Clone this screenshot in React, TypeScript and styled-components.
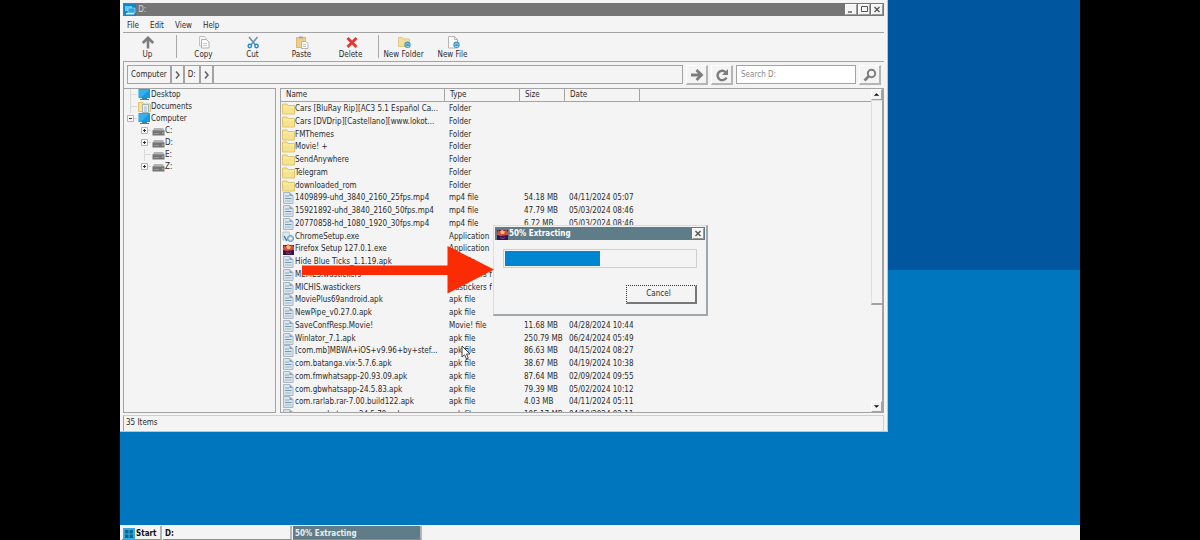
import React from "react";
import styled, { createGlobalStyle, css } from "styled-components";

const c = {
  face: "#f4f4f4",
  line: "#a3a3a3",
  soft: "#cfcfcf",
  title: "#757575",
  active: "#5f7d89",
  text: "#2b2b2b",
  glyph: "#7d7d7d",
  blue: "#0086d1",
};

const Global = createGlobalStyle`
  * { box-sizing: border-box; }
  body { margin: 0; background: #000; }
  body, button, input, table {
    font-family: "DejaVu Sans Condensed", "DejaVu Sans", sans-serif;
    font-size: 8px;
    line-height: 12px;
    color: ${c.text};
  }
  button { margin: 0; padding: 0; border: 0; background: none; }
  ul { list-style: none; margin: 0; padding: 0; }
`;

const Desktop = styled.main`
  position: relative;
  width: 80%;
  height: 100vh;
  margin: 0 auto;
  display: flex;
  flex-direction: column;
  overflow: hidden;
  background: linear-gradient(#00569f 50%, #0076be 50%);
`;

const Workspace = styled.div`
  flex: 1;
  min-height: 0;
`;

/* Explorer window */
const Window = styled.section`
  width: 80%;
  height: 80vh;
  display: flex;
  flex-direction: column;
  padding: 3px 3px 0;
  background: ${c.face};
  border-right: 1px solid #a9cbe0;
  border-bottom: 1px solid #a9cbe0;
`;

const TitleBar = styled.header<{ $active?: boolean }>`
  display: flex;
  align-items: center;
  flex: none;
  height: 13px;
  padding: 0 1px;
  color: ${(p) => (p.$active ? "#fff" : "#d6d6d6")};
  background: ${(p) => (p.$active ? c.active : c.title)};
  font-weight: ${(p) => (p.$active ? "bold" : "normal")};
`;

const TitleText = styled.span`
  flex: 1;
  padding-top: 1px;
`;

const CaptionButton = styled.button`
  display: flex;
  width: 12px;
  height: 11px;
  margin-left: 1px;
  background: ${c.face};
  border: 1px solid #fff;
  border-right-color: #9a9a9a;
  border-bottom-color: #9a9a9a;
`;

const MenuBar = styled.nav`
  display: flex;
  flex: none;
  gap: 11px;
  height: 17px;
  padding: 3px 4px 0;
  border-bottom: 1px solid ${c.line};
`;

const ToolBar = styled.div`
  display: flex;
  flex: none;
  height: 29px;
  border-bottom: 1px solid ${c.line};
`;

const Tool = styled.button`
  display: flex;
  flex-direction: column;
  align-items: center;
  width: 49px;
  padding-top: 3px;
  white-space: nowrap;
`;

const Separator = styled.span`
  width: 1px;
  margin: 2px 2px 3px 4px;
  background: #a9a9a9;
  & ~ & { margin-left: 3px; margin-right: 0; }
`;

const AddressBar = styled.form`
  display: flex;
  flex: none;
  gap: 3px;
  height: 26px;
  padding: 3px;
  border-left: 1px solid ${c.line};
`;

const Crumbs = styled.div`
  display: flex;
  flex: 1;
  height: 19px;
  border: 1px solid ${c.line};
`;

const Crumb = styled.button<{ $chevron?: boolean }>`
  padding: 0 ${(p) => (p.$chevron ? 2 : 3)}px;
  border-right: 2px solid ${c.line};
  svg { display: block; }
`;

const RaisedButton = styled.button`
  display: flex;
  align-items: center;
  justify-content: center;
  width: 22px;
  height: 20px;
  border: 1px solid #fff;
  border-right: 2px solid #b5b5b5;
  border-bottom: 2px solid #b5b5b5;
`;

const Search = styled.input`
  width: 120px;
  height: 19px;
  padding: 0 4px;
  border: 1px solid ${c.line};
  border-radius: 0;
  background: #fff;
  &::placeholder { color: #8a8a8a; opacity: 1; }
`;

const Panes = styled.div`
  display: flex;
  flex: 1;
  gap: 4px;
  min-height: 0;
`;

const pane = css`
  border: 1px solid ${c.line};
  overflow: hidden;
`;

const TreePane = styled.nav`
  ${pane}
  width: 153px;
`;

const TreeItem = styled.li<{ $level: number }>`
  display: flex;
  align-items: center;
  height: 12px;
  padding-left: ${(p) => (p.$level ? 16 : 2)}px;
  svg { flex: none; }
`;

const ListPane = styled.div`
  ${pane}
  display: flex;
  flex: 1;
  border-right-width: 2px;
`;

const Files = styled.table`
  flex: 1;
  display: block;
  overflow: hidden;
  border-collapse: collapse;
`;

const Head = styled.thead`
  display: block;
  height: 13px;
  border-bottom: 1px solid ${c.line};
`;

const Body = styled.tbody`
  display: block;
`;

const cellWidths = css`
  & > :nth-child(1) { width: 164px; }
  & > :nth-child(2) { width: 75px; }
  & > :nth-child(3) { width: 45px; }
  & > :nth-child(4) { width: 75px; }
`;

const HeadRow = styled.tr`
  display: flex;
  ${cellWidths}
`;

const HeadCell = styled.th`
  height: 12px;
  padding: 0 5px;
  text-align: left;
  font-weight: normal;
  border-right: 1px solid ${c.line};
`;

/* Three 13px rows and one of 12px keep the list's line pitch */
const FileRow = styled.tr`
  display: flex;
  height: 13px;
  &:nth-child(4n) { height: 12px; }
  ${cellWidths}
`;

const Cell = styled.td`
  display: flex;
  align-items: center;
  padding: 0 3px 0 4px;
  white-space: nowrap;
`;

const NameCell = styled(Cell)`
  padding-left: 1px;
  svg { flex: none; }
`;

const ScrollBar = styled.div`
  display: flex;
  flex-direction: column;
  width: 11px;
`;

const ScrollButton = styled.button`
  display: flex;
  height: 11px;
  border: 1px solid #fff;
  border-right-color: ${c.line};
  border-bottom-color: ${c.line};
`;

const Track = styled.div`
  flex: 1;
`;

const Thumb = styled.div`
  height: 68%;
  border: 1px solid #dedede;
  border-right: 0;
  border-bottom: 2px solid ${c.line};
`;

const StatusBar = styled.footer`
  flex: none;
  height: 16px;
  margin-top: 2px;
  padding: 1px 2px;
  border: 1px solid ${c.soft};
  border-left-color: ${c.line};
  border-bottom: 0;
`;

/* Progress dialog */
const Dialog = styled.section`
  position: absolute;
  left: 373px;
  top: 225px;
  width: 215px;
  padding: 1px;
  background: ${c.face};
  border: 1px solid #dcdcdc;
  border-right: 2px solid #a0a6a9;
  border-bottom: 2px solid #a0a6a9;
`;

const DialogBody = styled.div`
  display: flex;
  flex-direction: column;
  align-items: flex-end;
  gap: 17px;
  padding: 9px 8px;
`;

const Progress = styled.progress`
  appearance: none;
  display: block;
  width: 100%;
  height: 19px;
  padding: 1px;
  border: 1px solid ${c.soft};
  &::-webkit-progress-bar { background: ${c.face}; }
  &::-webkit-progress-value { background: ${c.blue}; }
`;

const CancelButton = styled.button`
  width: 71px;
  height: 19px;
  padding-right: 5px;
  border: 1px dotted #333;
  border-right: 2px solid #777;
  border-bottom: 2px solid #777;
`;

const Arrow = styled.svg`
  position: absolute;
  left: 182px;
  top: 246px;
`;

const Pointer = styled.svg`
  position: absolute;
  left: 341px;
  top: 345px;
`;

/* Taskbar */
const TaskBar = styled.footer`
  display: flex;
  flex: none;
  gap: 1px;
  height: 15px;
  padding: 1px 2px 0;
  background: ${c.face};
`;

const Task = styled.button<{ $active?: boolean; $start?: boolean }>`
  display: flex;
  align-items: center;
  gap: 1px;
  width: ${(p) => (p.$start ? 40 : 129)}px;
  padding: 2px 0 0 ${(p) => (p.$start ? 1 : 2)}px;
  font-weight: bold;
  color: ${(p) => (p.$active ? "#e9f0f2" : "#111")};
  background: ${(p) => (p.$active ? c.active : c.face)};
  border-right: 2px solid #b4b4b4;
  border-bottom: 1px solid #8c8c8c;
`;

const Monitor = () => (
  <svg width="13" height="12" viewBox="0 0 13 12">
    <path d="M.5 0H12v9H.5z" fill="#159bdf" />
    <path d="M1 .5h10.500L3 8.500H1z" fill="#35b0ea" />
    <path d="M4 9h5v1h2v1H2v-1h2z" fill="#3c83ac" />
  </svg>
);

const ComputerTitle = () => (
  <svg width="12" height="12" viewBox="0 0 12 12">
    <path d="M0 0h12v12H0z" fill="#1387c6" />
    <path d="M1 2h7v5H1z" fill="#59c9f4" />
    <path d="M4 4h7v5H4z" fill="#2aa6e2" stroke="#b9e9fa" strokeWidth=".6" />
    <path d="M2 9h8v1.500H2z" fill="#d8eef8" />
  </svg>
);

const Folder = () => (
  <svg width="13" height="12" viewBox="0 0 13 12">
    <path d="M.5 11V1H5l1 1.500h6.500V11z" fill="#f7e38e" stroke="#dcc470" />
    <path d="M1 4h11" stroke="#fdf1b4" />
  </svg>
);

const Documents = () => (
  <svg width="13" height="12" viewBox="0 0 13 12">
    <path d="M.5 10.500V1.500H5l1 1.500h6.500v7.500z" fill="#f7e38e" stroke="#dcc470" />
    <path d="M4.500 3.500h6v8h-6z" fill="#eaf1f4" stroke="#a3b1b8" />
    <path d="M6 6h3M6 8h3M6 10h3" stroke="#93a9b5" strokeWidth=".8" />
  </svg>
);

const Drive = () => (
  <svg width="13" height="12" viewBox="0 0 13 12">
    <path d="M2 3h9l1.500 3H.5z" fill="#b3b3b3" />
    <path d="M.5 5.500h12v5H.5z" fill="#757575" />
    <path d="M2 8.500h5" stroke="#9b9b9b" />
    <path d="M10 8h1.500" stroke="#bfd0c0" />
  </svg>
);

const Page = () => (
  <svg width="13" height="12" viewBox="0 0 13 12">
    <path d="M1.500.5h6.500l3 3v8h-9.500z" fill="#d9e5ee" stroke="#a9b6c0" />
    <path d="M7.500 1v3h3.500z" fill="#7f9db4" />
    <path d="M3 4h4" stroke="#8aa8be" />
    <path d="M3 6.500h6.500" stroke="#7897ad" />
    <path d="M3 9h6.500" stroke="#9fb8c9" />
  </svg>
);

const Setup = () => (
  <svg width="13" height="12" viewBox="0 0 13 12">
    <path d="M1 1h6l1 3-3 5H1z" fill="#dbe8f0" stroke="#a9bac5" strokeWidth=".8" />
    <path d="M2 5l3 5" stroke="#3d7ba8" strokeWidth="1.400" />
    <circle cx="8.500" cy="7.500" r="3" fill="#a9cbe2" stroke="#6b92b0" />
    <circle cx="8.500" cy="7.500" r="1.200" fill="#fff" />
  </svg>
);

const Firefox = () => (
  <svg width="13" height="12" viewBox="0 0 13 12">
    <path d="M1 2h11v10H1z" fill="#2d1749" />
    <path d="M1 5l1-3 2 1.500L6 1l2 2 2-1.500L12 4v4H1z" fill="#d84b35" />
    <path d="M4 3.500l2-1.500 3 1.500L8 6H5z" fill="#f4b27c" />
    <path d="M1 7l4 1 7-1v5H1z" fill="#321554" />
    <path d="M4 9.500l3 1 2-1" stroke="#9b3e86" fill="none" />
  </svg>
);

const Expander = ({ open }: { open?: boolean }) => (
  <svg width="12" height="12" viewBox="0 0 12 12">
    <path d="M1.500 2.500h6v6h-6z" fill="#f8f8f8" stroke="#b5b5b5" />
    <path d={open ? "M3 5.500h3" : "M3 5.500h3M4.500 4v3"} stroke="#333" />
    <path d="M8 5.500h3" stroke="#d5d5d5" />
  </svg>
);

const Branch = () => (
  <svg width="12" height="12" viewBox="0 0 12 12">
    <path d="M4.500 0v12M5 5.500h6" stroke="#dadada" fill="none" />
  </svg>
);

const Chevron = () => (
  <svg width="7" height="10" viewBox="0 0 7 10">
    <path d="M2 1.500L5 5 2 8.500" fill="none" stroke="#5f5f5f" strokeWidth="1.500" />
  </svg>
);

const UpIcon = () => (
  <svg width="14" height="13" viewBox="0 0 14 13">
    <path d="M7 12.500V2M1.800 7L7 1.800 12.200 7" fill="none" stroke={c.glyph} strokeWidth="2.600" />
  </svg>
);

const CopyIcon = () => (
  <svg width="14" height="13" viewBox="0 0 14 13">
    <path d="M2.500.5h5l2 2v7.500h-7z" fill="#f8f8f8" stroke="#c2c2c2" />
    <path d="M4.500 3.500h5l2.500 2.500v6H4.500z" fill="#fbfbfb" stroke="#b0b0b0" />
    <path d="M6 7.500h4M6 9.500h4" stroke="#cdcdcd" />
  </svg>
);

const CutIcon = () => (
  <svg width="14" height="13" viewBox="0 0 14 13">
    <path d="M3 1l6.500 8M11.500 1L5 9" stroke="#6d93ad" strokeWidth="1.600" />
    <circle cx="3.800" cy="10" r="1.700" fill="none" stroke="#1f8bcb" strokeWidth="1.400" />
    <circle cx="10.500" cy="10" r="1.700" fill="none" stroke="#1f8bcb" strokeWidth="1.400" />
  </svg>
);

const PasteIcon = () => (
  <svg width="14" height="13" viewBox="0 0 14 13">
    <path d="M1.500 1.500h9v10h-9z" fill="#efcf8b" stroke="#dcb96f" />
    <path d="M4 .5h4v2H4z" fill="#a5a5a5" />
    <path d="M6.500 5.500h4l2.500 2v5H6.500z" fill="#fafafa" stroke="#b5b5b5" />
    <path d="M8 8.500h3M8 10.500h3" stroke="#c5c5c5" />
  </svg>
);

const DeleteIcon = () => (
  <svg width="14" height="13" viewBox="0 0 14 13">
    <path d="M3.500 2l9 9M12.500 2l-9 9" stroke="#e23b35" strokeWidth="3" />
  </svg>
);

const Globe = () => (
  <g>
    <circle cx="10.500" cy="8.800" r="3.200" fill="#4b9cc9" />
    <path d="M8.500 8.500q2-2 4 0M9 10.500h3" fill="none" stroke="#a7d8ee" strokeWidth=".8" />
  </g>
);

const NewFolderIcon = () => (
  <svg width="14" height="13" viewBox="0 0 14 13">
    <path d="M1.500 10.500v-9h4l1 1.500h6v7.500z" fill="#f2e09a" stroke="#dfca88" />
    <Globe />
  </svg>
);

const NewFileIcon = () => (
  <svg width="14" height="13" viewBox="0 0 14 13">
    <path d="M2.500.5h6l3 3v8.500h-9z" fill="#fbfbfb" stroke="#b5b5b5" />
    <path d="M8.500.5v3h3" fill="none" stroke="#b5b5b5" />
    <Globe />
  </svg>
);

const GoIcon = () => (
  <svg width="14" height="14" viewBox="0 0 14 14">
    <path d="M1 7h10M6.500 2l5 5-5 5" fill="none" stroke={c.glyph} strokeWidth="2.800" />
  </svg>
);

const RefreshIcon = () => (
  <svg width="14" height="14" viewBox="0 0 14 14">
    <path d="M11.500 9.500A4.700 4.700 0 1 1 10.500 4" fill="none" stroke={c.glyph} strokeWidth="2.400" />
    <path d="M13 1v6H7z" fill={c.glyph} />
  </svg>
);

const SearchIcon = () => (
  <svg width="14" height="14" viewBox="0 0 14 14">
    <circle cx="8.500" cy="5.500" r="3.700" fill="none" stroke={c.glyph} strokeWidth="2" />
    <path d="M6 8l-4.500 4.500" stroke={c.glyph} strokeWidth="2.600" />
  </svg>
);

const Glyph = ({ d, fill, weight = 1.4 }: { d: string; fill?: string; weight?: number }) => (
  <svg width="10" height="9" viewBox="0 0 10 9">
    <path d={d} fill={fill ?? "none"} stroke={fill ? "none" : "#555"} strokeWidth={weight} />
  </svg>
);

const CROSS = "M2.500 2l5 5M7.500 2l-5 5";

const StartLogo = () => (
  <svg width="12" height="12" viewBox="0 0 12 12">
    <path d="M0 0h12v12H0z" fill="#37a9dc" />
    <path d="M2 2h3.500v3.500H2zM6.500 2H10v3.500H6.500zM2 6.500h3.500V10H2zM6.500 6.500H10V10H6.500z" fill="#0d6796" />
  </svg>
);

const tools: [string, React.FC][][] = [
  [["Up", UpIcon]],
  [["Copy", CopyIcon], ["Cut", CutIcon], ["Paste", PasteIcon], ["Delete", DeleteIcon]],
  [["New Folder", NewFolderIcon], ["New File", NewFileIcon]],
];

const tree: { label: string; level: number; icon: React.FC; mark: "leaf" | "open" | "closed" }[] = [
  { label: "Desktop", level: 0, icon: Monitor, mark: "leaf" },
  { label: "Documents", level: 0, icon: Documents, mark: "leaf" },
  { label: "Computer", level: 0, icon: Monitor, mark: "open" },
  { label: "C:", level: 1, icon: Drive, mark: "closed" },
  { label: "D:", level: 1, icon: Drive, mark: "closed" },
  { label: "E:", level: 1, icon: Drive, mark: "leaf" },
  { label: "Z:", level: 1, icon: Drive, mark: "closed" },
];

const files: [string, string, string?, string?][] = [
  ["Cars [BluRay Rip][AC3 5.1 Español Ca...", "Folder"],
  ["Cars [DVDrip][Castellano][www.lokot...", "Folder"],
  ["FMThemes", "Folder"],
  ["Movie! +", "Folder"],
  ["SendAnywhere", "Folder"],
  ["Telegram", "Folder"],
  ["downloaded_rom", "Folder"],
  ["1409899-uhd_3840_2160_25fps.mp4", "mp4 file", "54.18 MB", "04/11/2024 05:07"],
  ["15921892-uhd_3840_2160_50fps.mp4", "mp4 file", "47.79 MB", "05/03/2024 08:46"],
  ["20770858-hd_1080_1920_30fps.mp4", "mp4 file", "6.72 MB", "05/03/2024 08:46"],
  ["ChromeSetup.exe", "Application"],
  ["Firefox Setup 127.0.1.exe", "Application"],
  ["Hide Blue Ticks_1.1.19.apk", "apk file"],
  ["MEMES.wastickers", "wastickers f"],
  ["MICHIS.wastickers", "wastickers f"],
  ["MoviePlus69android.apk", "apk file"],
  ["NewPipe_v0.27.0.apk", "apk file"],
  ["SaveConfResp.Movie!", "Movie! file", "11.68 MB", "04/28/2024 10:44"],
  ["Winlator_7.1.apk", "apk file", "250.79 MB", "06/24/2024 05:49"],
  ["[com.mb]MBWA+iOS+v9.96+by+stef...", "apk file", "86.63 MB", "04/15/2024 08:27"],
  ["com.batanga.vix-5.7.6.apk", "apk file", "38.67 MB", "04/19/2024 10:38"],
  ["com.fmwhatsapp-20.93.09.apk", "apk file", "87.64 MB", "02/09/2024 09:55"],
  ["com.gbwhatsapp-24.5.83.apk", "apk file", "79.39 MB", "05/02/2024 10:12"],
  ["com.rarlab.rar-7.00.build122.apk", "apk file", "4.03 MB", "04/11/2024 05:11"],
  ["com.yowhatsapp-24.5.79.apk", "apk file", "105.17 MB", "04/19/2024 02:11"],
];

const iconFor = (name: string, type: string) => {
  if (type === "Folder") return <Folder />;
  if (name.startsWith("Chrome")) return <Setup />;
  if (name.startsWith("Firefox")) return <Firefox />;
  return <Page />;
};

export default function App() {
  return (
    <>
      <Global />
      <Desktop>
        <Workspace>
          <Window aria-label="D:">
            <TitleBar>
              <ComputerTitle />
              <TitleText>&nbsp;D:</TitleText>
              <CaptionButton aria-label="Minimize"><Glyph d="M2 7h4" /></CaptionButton>
              <CaptionButton aria-label="Maximize"><Glyph d="M2.500 1.500h6v5h-6z" weight={1} /></CaptionButton>
              <CaptionButton aria-label="Close"><Glyph d={CROSS} /></CaptionButton>
            </TitleBar>
            <MenuBar>
              {["File", "Edit", "View", "Help"].map((m) => <button key={m}>{m}</button>)}
            </MenuBar>
            <ToolBar>
              {tools.map((group, i) => (
                <React.Fragment key={i}>
                  {i > 0 && <Separator />}
                  {group.map(([label, Icon]) => (
                    <Tool key={label}><Icon />{label}</Tool>
                  ))}
                </React.Fragment>
              ))}
            </ToolBar>
            <AddressBar onSubmit={(e) => e.preventDefault()}>
              <Crumbs>
                <Crumb type="button">Computer</Crumb>
                <Crumb type="button" $chevron aria-label="Expand Computer"><Chevron /></Crumb>
                <Crumb type="button">D:</Crumb>
                <Crumb type="button" $chevron aria-label="Expand D:"><Chevron /></Crumb>
              </Crumbs>
              <RaisedButton type="button" aria-label="Go"><GoIcon /></RaisedButton>
              <RaisedButton type="button" aria-label="Refresh"><RefreshIcon /></RaisedButton>
              <Search aria-label="Search D:" placeholder="Search D:" />
              <RaisedButton aria-label="Search"><SearchIcon /></RaisedButton>
            </AddressBar>
            <Panes>
              <TreePane aria-label="Folders">
                <ul>
                  {tree.map(({ label, level, icon: Icon, mark }) => (
                    <TreeItem key={label} $level={level}>
                      {mark === "leaf" ? <Branch /> : <Expander open={mark === "open"} />}
                      <Icon />
                      {label}
                    </TreeItem>
                  ))}
                </ul>
              </TreePane>
              <ListPane>
                <Files>
                  <Head>
                    <HeadRow>
                      {["Name", "Type", "Size", "Date"].map((h) => <HeadCell key={h}>{h}</HeadCell>)}
                    </HeadRow>
                  </Head>
                  <Body>
                    {files.map(([name, type, size, date]) => (
                      <FileRow key={name}>
                        <NameCell>{iconFor(name, type)}{name}</NameCell>
                        <Cell>{type}</Cell>
                        <Cell>{size}</Cell>
                        <Cell>{date}</Cell>
                      </FileRow>
                    ))}
                  </Body>
                </Files>
                <ScrollBar>
                  <ScrollButton aria-label="Scroll up"><Glyph d="M2 6l3-3 3 3z" fill="#111" /></ScrollButton>
                  <Track><Thumb /></Track>
                  <ScrollButton aria-label="Scroll down"><Glyph d="M2 3l3 3 3-3z" fill="#111" /></ScrollButton>
                </ScrollBar>
              </ListPane>
            </Panes>
            <StatusBar>35 Items</StatusBar>
          </Window>
        </Workspace>

        <Dialog role="dialog" aria-label="50% Extracting">
          <TitleBar $active>
            <Firefox />
            <TitleText>50% Extracting</TitleText>
            <CaptionButton aria-label="Close"><Glyph d={CROSS} /></CaptionButton>
          </TitleBar>
          <DialogBody>
            <Progress value={50} max={100} aria-label="Extracting" />
            <CancelButton>Cancel</CancelButton>
          </DialogBody>
        </Dialog>

        <Arrow width="193" height="48" viewBox="0 0 193 48">
          <path d="M0 19.500h145.500V0L192 23.500 145.500 47.500V29H0z" fill="#fb2b04" />
        </Arrow>
        <Pointer width="10" height="16" viewBox="0 0 10 16">
          <path d="M1 1v11l2.500-2.300L5.500 14l1.800-.8L5.500 9H9z" fill="#fff" stroke="#333" strokeWidth=".9" />
        </Pointer>

        <TaskBar>
          <Task $start><StartLogo />Start</Task>
          <Task>D:</Task>
          <Task $active>50% Extracting</Task>
        </TaskBar>
      </Desktop>
    </>
  );
}
